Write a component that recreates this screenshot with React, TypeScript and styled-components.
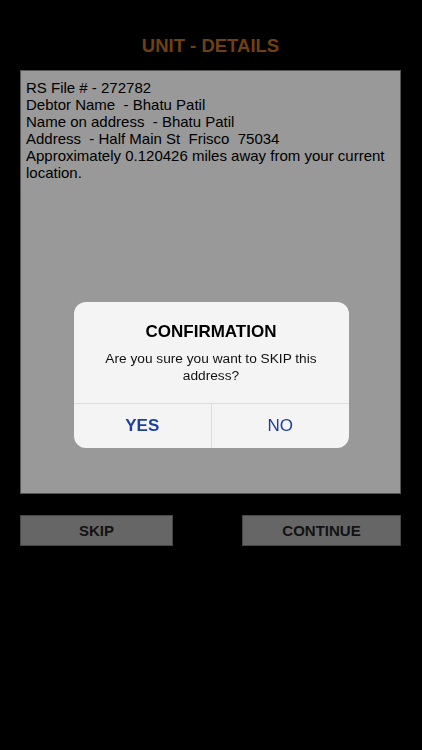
import React from 'react';
import styled, { createGlobalStyle } from 'styled-components';

const details = [
  'RS File # - 272782',
  'Debtor Name  - Bhatu Patil',
  'Name on address  - Bhatu Patil',
  'Address  - Half Main St  Frisco  75034',
  'Approximately 0.120426 miles away from your current location.',
];

const App = () => {
  return (
    <>
      <GlobalStyle />
      <Screen>
        <Title>UNIT - DETAILS</Title>
        <DetailsBox>
          {details.map((line) => (
            <DetailLine key={line}>{line}</DetailLine>
          ))}
        </DetailsBox>
        <ButtonRow>
          <ActionButton width={153}>SKIP</ActionButton>
          <ActionButton width={159}>CONTINUE</ActionButton>
        </ButtonRow>
      </Screen>
      <Overlay>
        <Alert>
          <AlertBody>
            <AlertTitle>CONFIRMATION</AlertTitle>
            <AlertMessage>Are you sure you want to SKIP this address?</AlertMessage>
          </AlertBody>
          <AlertActions>
            <AlertButton bold>YES</AlertButton>
            <AlertButton>NO</AlertButton>
          </AlertActions>
        </Alert>
      </Overlay>
    </>
  );
};

export default App;

const GlobalStyle = createGlobalStyle`
  html, body {
    margin: 0;
    padding: 0;
    background: #000000;
    font-family: "Liberation Sans", Arial, sans-serif;
  }
`;

const Screen = styled.div`
  width: 422px;
  height: 750px;
  background: #000000;
  display: flex;
  flex-direction: column;
  padding: 0 21px 0 20px;
  box-sizing: border-box;
`;

const Title = styled.h1`
  margin: 0;
  padding-top: 35px;
  height: 35px;
  line-height: 21px;
  text-align: center;
  font-size: 18.5px;
  font-weight: bold;
  color: #b86c22;
`;

const DetailsBox = styled.div`
  height: 424px;
  background: #ffffff;
  border: 1px solid #8e8e8e;
  box-sizing: border-box;
  padding: 8px 5px;
`;

const DetailLine = styled.div`
  font-size: 15px;
  line-height: 17px;
  color: #000000;
  white-space: pre-wrap;
`;

const ButtonRow = styled.div`
  display: flex;
  justify-content: space-between;
  margin-top: 21px;
`;

const ActionButton = styled.div<{ width: number }>`
  width: ${(p) => p.width}px;
  height: 31px;
  box-sizing: border-box;
  background: #aaaaaa;
  border: 1px solid #777777;
  display: flex;
  align-items: center;
  justify-content: center;
  font-size: 15px;
  font-weight: bold;
  color: #1f1f1f;
`;

const Overlay = styled.div`
  position: fixed;
  inset: 0;
  background: rgba(0, 0, 0, 0.4);
  display: flex;
  align-items: center;
  justify-content: center;
`;

const Alert = styled.div`
  width: 275px;
  height: 146px;
  border-radius: 12px;
  background: #f4f4f4;
  overflow: hidden;
  display: flex;
  flex-direction: column;
`;

const AlertBody = styled.div`
  flex: 1;
  padding: 20px 14px 0;
  text-align: center;
`;

const AlertTitle = styled.div`
  font-size: 17px;
  font-weight: bold;
  line-height: 20px;
  color: #000000;
`;

const AlertMessage = styled.div`
  margin-top: 8px;
  font-size: 13.7px;
  line-height: 17px;
  color: #111111;
  padding: 0 4px;
`;

const AlertActions = styled.div`
  height: 44px;
  display: grid;
  grid-template-columns: 1fr 1fr;
  border-top: 1px solid #dcdcdc;
`;

const AlertButton = styled.div<{ bold?: boolean }>`
  display: flex;
  align-items: center;
  justify-content: center;
  font-size: 17px;
  font-weight: ${(p) => (p.bold ? 'bold' : 'normal')};
  color: #1d3f9f;
  & + & {
    border-left: 1px solid #dcdcdc;
  }
`;
